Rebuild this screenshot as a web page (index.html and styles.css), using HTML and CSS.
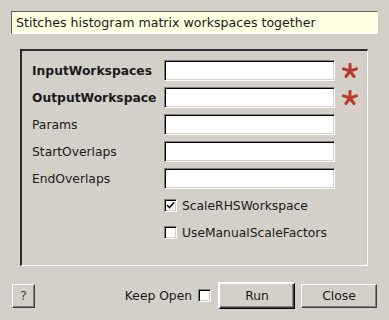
FILE: index.html
```html
<!DOCTYPE html>
<html lang="en">
  <head>
    <meta charset="UTF-8" />
    <title>StitchByHistogram</title>
    <link rel="stylesheet" href="styles.css" />
  </head>
  <body>
    <div class="dialog">
      <div class="description">Stitches histogram matrix workspaces together</div>

      <div class="frame">
        <div class="prop-grid">
          <label class="prop-label bold" for="input-ws">InputWorkspaces</label>
          <input class="field" type="text" id="input-ws" />
          <span class="required">
            <svg width="16" height="16" viewBox="0 0 16 16">
              <path d="M8 8V1.2M8 8L14.5 5.9M8 8L12 13.5M8 8L4 13.5M8 8L1.5 5.9" />
            </svg>
          </span>

          <label class="prop-label bold" for="output-ws">OutputWorkspace</label>
          <input class="field" type="text" id="output-ws" />
          <span class="required">
            <svg width="16" height="16" viewBox="0 0 16 16">
              <path d="M8 8V1.2M8 8L14.5 5.9M8 8L12 13.5M8 8L4 13.5M8 8L1.5 5.9" />
            </svg>
          </span>

          <label class="prop-label" for="params">Params</label>
          <input class="field" type="text" id="params" />
          <span></span>

          <label class="prop-label" for="start-overlaps">StartOverlaps</label>
          <input class="field" type="text" id="start-overlaps" />
          <span></span>

          <label class="prop-label" for="end-overlaps">EndOverlaps</label>
          <input class="field" type="text" id="end-overlaps" />
          <span></span>

          <span></span>
          <label class="check-row">
            <span class="checkbox">
              <svg width="9" height="9" viewBox="0 0 9 9">
                <path d="M1 4L3.5 6.5L8 1.5" />
              </svg>
            </span>
            ScaleRHSWorkspace
          </label>
          <span></span>

          <span></span>
          <label class="check-row">
            <span class="checkbox"></span>
            UseManualScaleFactors
          </label>
          <span></span>
        </div>
      </div>

      <div class="button-bar">
        <button class="btn btn-help" type="button">?</button>
        <div class="spacer"></div>
        <label class="keep-open">
          Keep Open
          <span class="checkbox"></span>
        </label>
        <button class="btn btn-run" type="button">Run</button>
        <button class="btn btn-close" type="button">Close</button>
      </div>
    </div>
  </body>
</html>
```

FILE: styles.css
```css
:root {
  --bg: #d4d0c8;
  --text: #1a1a1a;
  --dark: #404040;
  --shadow: #808080;
  --light: #ffffff;
  --required: #b83a2c;
}

body {
  margin: 0;
  background: var(--bg);
  font-family: "DejaVu Sans", sans-serif;
  font-size: 12.3px;
  color: var(--text);
}

.dialog {
  width: 389px;
  height: 320px;
  padding: 11px 11px 0 11px;
  box-sizing: border-box;
}

/* Description banner */
.description {
  height: 23px;
  box-sizing: border-box;
  padding-left: 4px;
  line-height: 21px;
  font-size: 12.6px;
  background: #ffffe1;
  border: 1px solid;
  border-color: #606060 #ffffff #ffffff #606060;
}

/* Property frame */
.frame {
  margin: 15px 10px 0 9px;
  height: 217px;
  box-sizing: border-box;
  border-style: solid;
  border-width: 2px 1px 1px 2px;
  border-color: #2a2a2a var(--light) var(--light) #2a2a2a;
  padding: 9px 0 0 10px;
}

.prop-grid {
  display: grid;
  grid-template-columns: 132px 171px 33px;
  grid-auto-rows: 21px;
  row-gap: 6px;
  align-items: center;
}

.prop-label {
  white-space: nowrap;
}

.bold {
  font-weight: bold;
}

.field {
  height: 21px;
  width: 171px;
  box-sizing: border-box;
  margin: 0;
  padding: 0 3px;
  background: #fff;
  border: 1px solid;
  border-color: var(--shadow) var(--light) var(--light) var(--shadow);
  box-shadow: inset 1px 1px #000, inset -1px -1px var(--bg);
  outline: none;
}

.required {
  display: flex;
  padding-left: 7px;
}

.required path {
  fill: none;
  stroke: var(--required);
  stroke-width: 3;
  stroke-linecap: round;
}

/* Checkboxes */
.check-row {
  display: flex;
  align-items: center;
  gap: 5px;
  white-space: nowrap;
  height: 20px;
}

.checkbox {
  display: inline-flex;
  align-items: center;
  justify-content: center;
  width: 13px;
  height: 13px;
  box-sizing: border-box;
  background: #fff;
  border: 1px solid;
  border-color: var(--shadow) var(--light) var(--light) var(--shadow);
  box-shadow: inset 1px 1px #000, inset -1px -1px var(--bg);
}

.checkbox path {
  fill: none;
  stroke: #000;
  stroke-width: 1.6;
}

/* Bottom button bar */
.button-bar {
  display: flex;
  align-items: center;
  margin-top: 16px;
  height: 27px;
}

.spacer {
  flex: 1;
}

.btn {
  font-family: "DejaVu Sans", sans-serif;
  font-size: 12.3px;
  color: var(--text);
  background: var(--bg);
  border: 1px solid;
  border-color: var(--light) var(--dark) var(--dark) var(--light);
  box-shadow: inset -1px -1px var(--shadow);
  padding: 0;
  margin: 0;
}

.btn-help {
  width: 23px;
  height: 24px;
  margin-left: 1px;
  color: #444;
}

.keep-open {
  display: flex;
  align-items: center;
  gap: 6px;
  margin-right: 7px;
}

.btn-run {
  width: 77px;
  height: 27px;
  border-width: 2px 1px 1px 2px;
  border-color: var(--light) #000 #000 var(--light);
  box-shadow: inset -1px -1px var(--dark), inset -2px -2px var(--shadow);
}

.btn-close {
  width: 76px;
  height: 24px;
  margin-left: 6px;
  margin-right: 1px;
}
```
